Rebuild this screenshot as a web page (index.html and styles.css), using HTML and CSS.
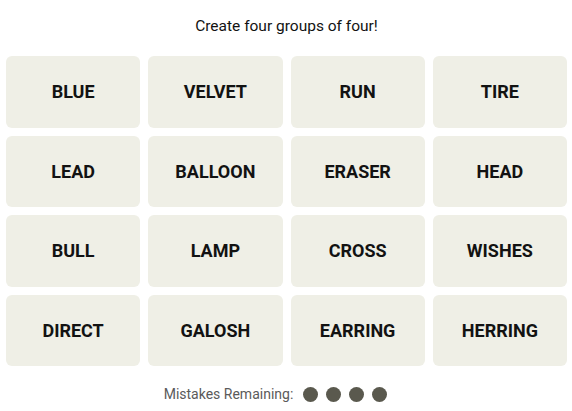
FILE: index.html
```html
<!DOCTYPE html>
<html>
<head>
<meta charset="utf-8">
<link rel="stylesheet" href="styles.css">
</head>
<body>
<div class="game">
  <p class="prompt">Create four groups of four!</p>
  <div class="board">
    <div class="tile">BLUE</div>
    <div class="tile">VELVET</div>
    <div class="tile">RUN</div>
    <div class="tile">TIRE</div>
    <div class="tile">LEAD</div>
    <div class="tile">BALLOON</div>
    <div class="tile">ERASER</div>
    <div class="tile">HEAD</div>
    <div class="tile">BULL</div>
    <div class="tile">LAMP</div>
    <div class="tile">CROSS</div>
    <div class="tile">WISHES</div>
    <div class="tile">DIRECT</div>
    <div class="tile">GALOSH</div>
    <div class="tile">EARRING</div>
    <div class="tile">HERRING</div>
  </div>
  <div class="mistakes">
    <span class="label">Mistakes Remaining:</span>
    <span class="dots"><span class="dot"></span><span class="dot"></span><span class="dot"></span><span class="dot"></span></span>
  </div>
</div>
</body>
</html>
```
FILE: styles.css
```css
html, body {
  margin: 0;
  padding: 0;
  background: #ffffff;
}
body {
  font-family: Roboto, "Liberation Sans", sans-serif;
  color: #121212;
}
.game {
  width: 561px;
  margin-left: 6px;
  display: flex;
  flex-direction: column;
  align-items: center;
}
.prompt {
  margin: 0;
  padding-top: 16px;
  height: 20px;
  line-height: 20px;
  margin-bottom: 20px;
  font-size: 15.5px;
  color: #121212;
}
.board {
  width: 100%;
  display: grid;
  grid-template-columns: repeat(4, 1fr);
  grid-auto-rows: 71.5px;
  gap: 8px 8px;
}
.tile {
  background: #efefe6;
  border-radius: 6px;
  display: flex;
  align-items: center;
  justify-content: center;
  font-weight: 700;
  font-size: 18px;
  color: #121212;
}
.mistakes {
  margin-top: 18px;
  margin-right: 22px;
  height: 20px;
  display: flex;
  align-items: center;
  gap: 10px;
  font-size: 14px;
  color: #5a5a5a;
}
.dots {
  display: flex;
  gap: 8px;
}
.dot {
  width: 15px;
  height: 15px;
  border-radius: 50%;
  background: #5a594e;
}
```
